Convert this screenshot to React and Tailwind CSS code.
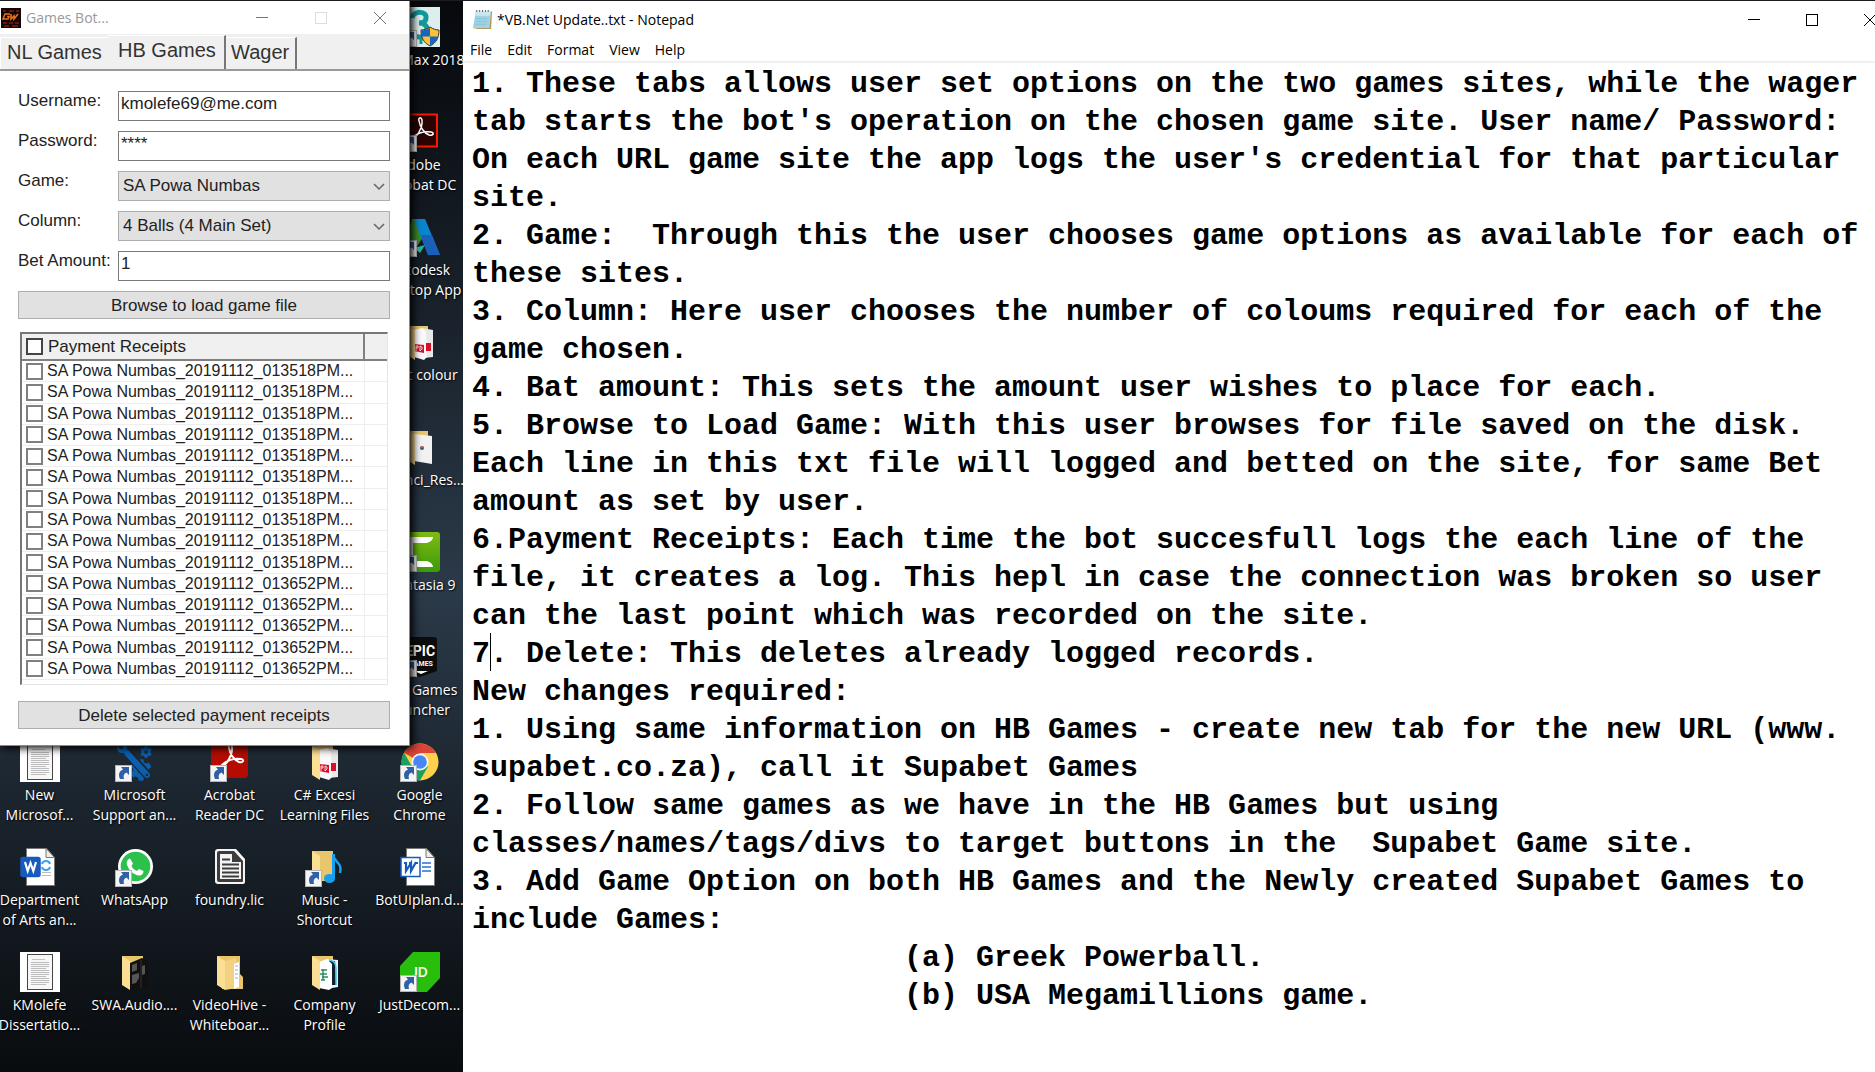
import React from "react";
import { FaWrench, FaCog } from "react-icons/fa";

const UI = "font-['Open_Sans','Noto_Sans',sans-serif]";
const FORM = "font-['Liberation_Sans',Arial,sans-serif]";

const NOTE = `1. These tabs allows user set options on the two games sites, while the wager
tab starts the bot's operation on the chosen game site. User name/ Password:
On each URL game site the app logs the user's credential for that particular
site.
2. Game:  Through this the user chooses game options as available for each of
these sites.
3. Column: Here user chooses the number of coloums required for each of the
game chosen.
4. Bat amount: This sets the amount user wishes to place for each.
5. Browse to Load Game: With this user browses for file saved on the disk.
Each line in this txt file will logged and betted on the site, for same Bet
amount as set by user.
6.Payment Receipts: Each time the bot succesfull logs the each line of the
file, it creates a log. This hepl in case the connection was broken so user
can the last point which was recorded on the site.
7. Delete: This deletes already logged records.
New changes required:
1. Using same information on HB Games - create new tab for the new URL (www.
supabet.co.za), call it Supabet Games
2. Follow same games as we have in the HB Games but using
classes/names/tags/divs to target buttons in the  Supabet Game site.
3. Add Game Option on both HB Games and the Newly created Supabet Games to
include Games:
                        (a) Greek Powerball.
                        (b) USA Megamillions game.`;

function Svg({ children }) {
  return (
    <svg viewBox="0 0 40 40" className="size-10" aria-hidden="true">
      {children}
    </svg>
  );
}

function Arrow() {
  return (
    <g>
      <rect x="0.5" y="23.5" width="16" height="16" fill="#f4f4f4" stroke="#b5b5b5" />
      <path d="M5 37c-2-4-1-8 3-9.500l-2-2.500h8v8l-2.500-2.500c-2.500 1-3.500 3-2.500 6.500z" fill="#2f5fa5" />
    </g>
  );
}

function PaperIcon() {
  return (
    <Svg>
      <rect width="40" height="40" fill="#fff" />
      <rect x="7.500" y="2.500" width="25" height="35" fill="#f7f7f7" stroke="#444" />
      <path d="M12 7.500h13" stroke="#c4c4c4" />
      {[10, 12, 14, 16, 18, 20, 22, 24, 26, 28, 30, 32].map((y, i) => (
        <path key={y} d={`M11 ${y}.5h${i % 4 === 3 ? 15 : 18}`} stroke="#bdbdbd" />
      ))}
    </Svg>
  );
}

function FolderIcon({ children, shortcut, full }) {
  return (
    <Svg>
      <path d={full ? "M7 4h23v18l3 3v12h-21z" : "M7 4h21v30H12z"} fill="#e9c66c" />
      {children}
      <path d="M7 4l8 5v29l-8-5z" fill="#fbdf94" />
      {shortcut && <Arrow />}
    </Svg>
  );
}

function PdfFolderIcon() {
  return (
    <FolderIcon>
      <path d="M22 6l11 2v27l-9 1z" fill="#e8e8e8" />
      <path d="M14 8l8-2 4 4 1 25-3 3-10-3z" fill="#fafafa" />
      <path d="M14 22l10 1v8l-10-2z M26 21h5v8h-5z" fill="#d9102a" />
      <path d="M16 24v5m0-5h2v2h-2M20 24v5l2-2v-2z" stroke="#fff" fill="none" strokeWidth="0.8" />
    </FolderIcon>
  );
}

function WordIcon({ old }) {
  return (
    <Svg>
      <path d="M6.500 1.500h20l8 9v28h-28z" fill="#fff" stroke="#777" />
      <path d="M26 1.500v9h8.500z" fill="#eee" stroke="#777" />
      {old ? (
        <path d="M22 16h9M22 20h9M22 24h9" stroke="#2a72c8" strokeWidth="1.300" />
      ) : (
        <g fill="none">
          <path d="M22 17c1-4 7-4 8 0M22 20c1 4 7 4 8 0" stroke="#3aa0e8" strokeWidth="2" />
          <path d="M22 25.500h9M22 28.500h9" stroke="#bbb" />
        </g>
      )}
      <rect x="1" y="10.500" width="19" height="19" rx={old ? 0 : 2} fill={old ? "#fff" : "#185abd"} stroke="#185abd" strokeWidth="1.500" />
      <path
        d={old ? "M4 16h3M6 15v9l5-8v8l5-9M9 16h3M15 16h3" : "M5 15l2.700 9 2.800-8 2.800 8 2.700-9"}
        fill="none"
        stroke={old ? "#185abd" : "#fff"}
        strokeWidth="2.200"
      />
    </Svg>
  );
}

const ACROBAT = "M11 29c4-2 11-12 10-20-1-4-4-2-3 1 1 6 5 12 10 14 4 1 6-2 2-3-6-1-13 1-18 5-3 2-3 4-1 3z";

const ICONS = {
  max: (
    <Svg>
      <rect width="40" height="40" fill="#dcefee" />
      <path d="M12 11c2-8 15-7 14 0 0 4-4 5-7 5 5 0 9 3 8 8-2 7-12 8-14 2" fill="none" stroke="#12999c" strokeWidth="5" />
      <path d="M21 28v9" stroke="#12999c" strokeWidth="3" />
      <path d="M30 20c3 2 6 3 9 3 0 8-3 13-9 16-6-3-9-8-9-16 3 0 6-1 9-3z" fill="#ffc233" stroke="#333" strokeWidth="1" />
      <path d="M30 21v8.500h-8.500c-.5-2-.5-4-.5-6 3 0 6-1 9-2.500zM30 29.500h8c-1 4-4 7-8 9z" fill="#1765c1" />
      <Arrow />
    </Svg>
  ),
  acrobat: (
    <Svg>
      <rect x="3" y="2.500" width="34" height="32" fill="#2a0303" stroke="#f91800" strokeWidth="2" />
      <path d={ACROBAT} fill="none" stroke="#fff" strokeWidth="1.500" transform="translate(1 -1)" />
      <Arrow />
    </Svg>
  ),
  autodesk: (
    <Svg>
      <path d="M2 38L12 2h6l5 18-9 14z" fill="#3a8d2f" />
      <path d="M14 2h11l15 36H28z" fill="#0a86cf" />
      <path d="M21 18l6 17 2 3h11l-8-20z" fill="#1a5fb8" />
      <path d="M14 31l11-3-5 8z" fill="#27b79a" />
      <Arrow />
    </Svg>
  ),
  pdf: <PdfFolderIcon />,
  davinci: (
    <FolderIcon>
      <path d="M14 7l18 2v28l-18-3z" fill="#f2f2f2" />
      <circle cx="22" cy="21" r="2" fill="#385b70" />
      <circle cx="22" cy="20" r="1" fill="#d06045" />
    </FolderIcon>
  ),
  camtasia: (
    <Svg>
      <defs>
        <linearGradient id="cam" x1="0" y1="0" x2="0" y2="1">
          <stop stopColor="#7fbb12" />
          <stop offset="1" stopColor="#3c9b08" />
        </linearGradient>
      </defs>
      <rect width="40" height="40" rx="3" fill="url(#cam)" />
      <path d="M5 5h28c0 3-3 5-6 6H13v18h14c3 1 6 3 6 6H5z" fill="#fff" />
      <Arrow />
    </Svg>
  ),
  epic: (
    <Svg>
      <path d="M3 3q0-3 3-3h28q3 0 3 3v31l-17 6-17-6z" fill="#0c0c0c" />
      <text x="20" y="19" textAnchor="middle" fontSize="14" fontWeight="700" fill="#fff" fontFamily="Roboto, sans-serif">EPIC</text>
      <text x="21" y="29" textAnchor="middle" fontSize="7" fontWeight="700" fill="#fff" fontFamily="Roboto, sans-serif">GAMES</text>
      <path d="M14 34h14l-7 3z" fill="#fff" />
      <Arrow />
    </Svg>
  ),
  paper: <PaperIcon />,
  tools: (
    <Svg>
      <FaCog x="15" y="17" size="22" color="#0b5fae" />
      <FaCog x="25" y="4" size="12" color="#0b5fae" />
      <path d="M12 10l22 25" stroke="#1c2630" strokeWidth="9" />
      <path d="M12 11l20 22" stroke="#0b5fae" strokeWidth="6" strokeLinecap="round" />
      <g transform="translate(26 0) scale(-1 1)">
        <FaWrench x="6" y="1" size="18" color="#0b5fae" />
      </g>
      <circle cx="32" cy="33" r="1.300" fill="#1c2630" />
      <Arrow />
    </Svg>
  ),
  reader: (
    <Svg>
      <rect x="1" y="0" width="37" height="36" rx="4" fill="#b40c00" />
      <path d={ACROBAT} fill="none" stroke="#fff" strokeWidth="2" transform="translate(1 -4)" />
      <Arrow />
    </Svg>
  ),
  chrome: (
    <Svg>
      <circle cx="20" cy="20" r="18.500" fill="#fdd14b" />
      <path d="M20 20L4 10.700A18.500 18.500 0 0 1 36 11H20z" fill="#db4437" />
      <path d="M4 10.700A18.500 18.500 0 0 0 20 38.500l8-14-16 0z" fill="#1ba15f" />
      <circle cx="20" cy="20" r="8.500" fill="#f4f4f4" />
      <circle cx="20" cy="20" r="6.800" fill="#4a85f5" />
      <Arrow />
    </Svg>
  ),
  word: <WordIcon />,
  wordOld: <WordIcon old />,
  whatsapp: (
    <Svg>
      <circle cx="20.500" cy="19.500" r="17.500" fill="#fff" />
      <circle cx="20.500" cy="19.500" r="14.800" fill="#2cc04c" />
      <path d="M15 11.500c-3 1-4 4-2.500 7.500 2 5 6 8.500 11 9.500 3 .5 5-1.500 5-4.500l-4.500-2-2.200 2c-2.500-1-4.300-3-5.300-5l1.500-2.500z" fill="#fff" />
      <Arrow />
    </Svg>
  ),
  foundry: (
    <Svg>
      <path d="M8 2h18l9 10v23q0 2-2 2H8q-3 0-3-3V5q0-3 3-3z" fill="#f4f4f4" />
      <path d="M9 4h15l9 10v20q0 1-1 1H9q-2 0-2-2V6q0-2 2-2z" fill="#3c3c3c" />
      <path d="M10 7h12v8h9v17H10z" fill="#f4f4f4" />
      <path d="M12 12.500h8M12 17.500h17M12 21.500h17M12 25.500h17M12 29.500h17" stroke="#3c3c3c" strokeWidth="2" />
    </Svg>
  ),
  music: (
    <FolderIcon shortcut>
      <path d="M28.500 7v24" stroke="#18a0f0" strokeWidth="3" />
      <path d="M28 8c1 7 10 8 7 18" fill="none" stroke="#18a0f0" strokeWidth="2.500" />
      <ellipse cx="24.500" cy="31.500" rx="5.500" ry="4.500" fill="#18a0f0" />
    </FolderIcon>
  ),
  audio: (
    <FolderIcon>
      <path d="M15 11l12-5 6 3v27l-9 1-9 1z" fill="#101010" />
      <path d="M17 13l5-2v7l-5 2zM27 14l3-1v9l-3 1zM17 23l7-2v5l-3 5-4 1z" fill="#555" />
      <path d="M26 8v28" stroke="#333" />
    </FolderIcon>
  ),
  video: (
    <FolderIcon full>
      <path d="M15 9l11-3 1 30-12 2z" fill="#f2d183" />
      <path d="M24 12l5-2v25l-5 2z" fill="#fff" />
      <path d="M25 14h3M25 18h3M25 22h3M25 26h3" stroke="#7fb2dd" />
    </FolderIcon>
  ),
  company: (
    <FolderIcon>
      <path d="M21 7l12 1v27l-12 2z" fill="#e8f6fb" />
      <path d="M21 9h9l1 24h-8z" fill="#0b2233" />
      <path d="M24 8c6 1 7 4 7 10v15" fill="none" stroke="#44c4e8" strokeWidth="1.500" />
      <path d="M14 10l8-3 5 5v24l-3 2-10-2z" fill="#fff" />
      <path d="M16 18h6M15 22h7M17 25h6M16 28h4M18 17v11" stroke="#2a9060" strokeWidth="1.500" />
    </FolderIcon>
  ),
  decompile: (
    <Svg>
      <path d="M13 0h27v26L27 40H0V14z" fill="#27bf0b" />
      <text x="20" y="25" textAnchor="middle" fontSize="13" fontWeight="700" fill="#fff" fontFamily="Lato, sans-serif">JD</text>
      <Arrow />
    </Svg>
  ),
};

const RIGHT_COLUMN = [
  ["max", "3ds Max 2018"],
  ["acrobat", "Adobe", "Acrobat DC"],
  ["autodesk", "Autodesk", "Desktop App"],
  ["pdf", "Print colour"],
  ["davinci", "DaVinci_Res..."],
  ["camtasia", "Camtasia 9"],
  ["epic", "Epic Games", "Launcher"],
];

const LOWER_ROWS = [
  ["paper", "New", "Microsof..."],
  ["tools", "Microsoft", "Support an..."],
  ["reader", "Acrobat", "Reader DC"],
  ["pdf", "C# Excesi", "Learning Files"],
  ["chrome", "Google", "Chrome"],
  ["word", "Department", "of Arts an..."],
  ["whatsapp", "WhatsApp"],
  ["foundry", "foundry.lic"],
  ["music", "Music -", "Shortcut"],
  ["wordOld", "BotUIplan.d..."],
  ["paper", "KMolefe", "Dissertatio..."],
  ["audio", "SWA.Audio...."],
  ["video", "VideoHive -", "Whiteboar..."],
  ["company", "Company", "Profile"],
  ["decompile", "JustDecom..."],
];

function DesktopItem({ item, last }) {
  const [icon, ...lines] = item;
  return (
    <li className={last ? "col-start-5 flex flex-col items-center gap-[3px]" : "flex flex-col items-center gap-[3px]"}>
      {ICONS[icon]}
      <span className="text-center text-[14px] leading-5 whitespace-nowrap text-white [text-shadow:1px_1px_2px_#000]">
        {lines.map((l) => (
          <span key={l} className="block">{l}</span>
        ))}
      </span>
    </li>
  );
}

function WinButtons({ muted, className }) {
  const stroke = muted ? "#777" : "#000";
  return (
    <div className={className}>
      <button type="button" aria-label="Minimize" className="flex h-full flex-1 items-center justify-center">
        <svg width="12" height="12"><path d="M0 5.500h12" stroke={stroke} /></svg>
      </button>
      <button type="button" aria-label="Maximize" className="flex h-full flex-1 items-center justify-center">
        <svg width="12" height="12"><rect x="0.5" y="0.5" width="11" height="11" fill="none" stroke={muted ? "#ddd" : stroke} /></svg>
      </button>
      <button type="button" aria-label="Close" className="flex h-full flex-1 items-center justify-center">
        <svg width="12" height="12"><path d="M0 0l12 12M12 0L0 12" stroke={stroke} /></svg>
      </button>
    </div>
  );
}

const FIELD = "h-[30px] w-full border border-[#7a7a7a] bg-white px-[2px] pb-1 text-[17px] text-[#222] outline-none";

function Row({ id, label, children }) {
  return (
    <div className="flex h-[30px]">
      <label htmlFor={id} className="w-[100px] shrink-0 leading-5 whitespace-nowrap">{label}</label>
      <div className="relative flex-1">{children}</div>
    </div>
  );
}

function Select({ id, value }) {
  return (
    <>
      <select id={id} className="h-[30px] w-full appearance-none border border-[#adadad] bg-[#e1e1e1] px-1 text-[17px] text-[#222] outline-none">
        <option>{value}</option>
      </select>
      <svg viewBox="0 0 12 8" className="pointer-events-none absolute top-3 right-[5px] h-2 w-3">
        <path d="M1 1l5 5 5-5" fill="none" stroke="#666" strokeWidth="1.500" />
      </svg>
    </>
  );
}

const RECEIPTS = Array.from({ length: 15 }, (_, i) =>
  i < 10 ? "SA Powa Numbas_20191112_013518PM..." : "SA Powa Numbas_20191112_013652PM..."
);

const BTN = "h-7 w-full border border-[#adadad] bg-[#e1e1e1] text-[17px] leading-none text-[#222]";

function GamesBot() {
  return (
    <section aria-label="Games Bot" className="absolute top-0 left-0 w-[410px] border-r border-b border-[#8a8a8a] bg-white shadow-[3px_2px_8px_#000]">
      <header className={`flex h-[33px] items-center ${UI}`}>
        <svg viewBox="0 0 20 20" className="ml-px size-5" aria-hidden="true">
          <rect width="20" height="20" fill="#120606" />
          <path d="M9 6H4L2 11h5l1-2.500H6M10 6l0 5 3-3 0 3 4-5" fill="none" stroke="#e8701c" strokeWidth="1.600" />
          <path d="M2 3h3M8 3h5M15 3h3M2 15h4M8 15h4M14 15h4M3 18h5M11 18h6" stroke="#8c1414" strokeWidth="1.500" />
        </svg>
        <h1 className="ml-[5px] text-[14px] text-[#999]">Games Bot...</h1>
        <WinButtons muted className="ml-auto flex h-full w-[177px]" />
      </header>

      <nav role="tablist" className={`flex h-[37px] items-end border-b-2 border-[#9a9a9a] bg-[#f0f0f0] text-[20px] leading-none text-[#333] ${FORM}`}>
        <button type="button" role="tab" aria-selected="false" className="h-8 w-[108px] border-t border-l border-white pb-[3px] pl-[6px] text-left whitespace-nowrap">NL Games</button>
        <button type="button" role="tab" aria-selected="true" className="h-[34px] w-[118px] border-t border-r-2 border-t-white border-r-[#777] pb-[6px] pl-[10px] text-left whitespace-nowrap">HB Games</button>
        <button type="button" role="tab" aria-selected="false" className="h-8 w-[71px] border-t border-r-2 border-t-white border-r-[#777] pb-[3px] pl-[5px] text-left">Wager</button>
      </nav>

      <form className={`pt-5 pr-[19px] pb-4 pl-[18px] text-[17px] text-[#222] ${FORM}`} onSubmit={(e) => e.preventDefault()}>
        <div className="flex flex-col gap-[10px]">
          <Row id="user" label="Username:">
            <input id="user" className={FIELD} defaultValue="kmolefe69@me.com" />
          </Row>
          <Row id="pass" label="Password:">
            <input id="pass" className={FIELD} defaultValue="****" autoComplete="off" />
          </Row>
          <Row id="game" label="Game:">
            <Select id="game" value="SA Powa Numbas" />
          </Row>
          <Row id="column" label="Column:">
            <Select id="column" value="4 Balls (4 Main Set)" />
          </Row>
          <Row id="bet" label="Bet Amount:">
            <input id="bet" className={FIELD} defaultValue="1" />
          </Row>
        </div>
        <button type="button" className={`mt-[10px] ${BTN}`}>Browse to load game file</button>

        <div className="mt-[13px] mr-[2px] ml-[2px] border-t-2 border-r border-b border-l-2 border-t-[#777] border-r-[#e5e5e5] border-b-[#e5e5e5] border-l-[#777] pb-1">
          <table className="h-[346px] w-full table-fixed border-collapse text-[16px] leading-5">
            <thead>
              <tr className="bg-[#f0f0f0]">
                <th className="h-[26px] w-[342px] border-r-2 border-b-2 border-[#808080] p-0 text-left font-normal">
                  <label className="flex items-center gap-[5px] pl-1 text-[17px]">
                    <input type="checkbox" className="size-[17px] appearance-none border-2 border-[#444] bg-white" />
                    Payment Receipts
                  </label>
                </th>
                <th className="border-b-2 border-[#808080] p-0" aria-label="Status" />
              </tr>
            </thead>
            <tbody>
              {RECEIPTS.map((r, i) => (
                <tr key={i} className="border-b border-[#eee]">
                  <td className="border-r border-[#eee] p-0">
                    <label className="flex items-center gap-1 pl-1 whitespace-nowrap">
                      <input type="checkbox" className="size-[17px] shrink-0 appearance-none border-2 border-[#808080] bg-white" />
                      {r}
                    </label>
                  </td>
                  <td className="p-0" />
                </tr>
              ))}
            </tbody>
          </table>
        </div>
        <button type="button" className={`mt-4 ${BTN}`}>Delete selected payment receipts</button>
      </form>
    </section>
  );
}

function Notepad() {
  return (
    <section aria-label="Notepad" className="flex min-w-0 flex-1 flex-col overflow-hidden bg-white text-black">
      <header className="flex h-[37px] items-center pl-[9px]">
        <svg viewBox="0 0 22 22" className="size-[21px]" aria-hidden="true">
          <path d="M4 2h16l-2 18H1z" fill="#9fd3e3" />
          <path d="M4 2h16l-1 5H3z" fill="#c8e8f0" />
          <path d="M20 2l1 1-1 18H6l-5-1 17 0z" fill="#b19a62" />
          <path d="M5 1v2M8 1v2M11 1v2M14 1v2M17 1v2" stroke="#555" strokeWidth="1" />
          <path d="M4 10h12M4 13h12M3 16h12" stroke="#7dbdd2" strokeWidth="0.7" />
        </svg>
        <h1 className="ml-1 text-[14px]">*VB.Net Update..txt - Notepad</h1>
        <WinButtons className="-mr-6 ml-auto flex h-full w-[174px]" />
      </header>
      <nav className="flex h-[25px] items-end gap-[15px] border-b-2 border-[#f0f0f0] pl-[7px] text-[14px] leading-[22px]">
        {["File", "Edit", "Format", "View", "Help"].map((m) => (
          <button key={m} type="button">{m}</button>
        ))}
      </nav>
      <div className="relative flex flex-1">
        <textarea
          aria-label="Text editor"
          wrap="off"
          spellCheck={false}
          defaultValue={NOTE}
          className="flex-1 resize-none overflow-hidden pt-[2px] pl-[9px] font-['Liberation_Mono',monospace] text-[30px] leading-[38px] font-bold whitespace-pre outline-none"
        />
        <span className="pointer-events-none absolute top-[570px] left-[27px] h-[38px] w-px bg-black" />
      </div>
    </section>
  );
}

export default function App() {
  return (
    <main className={`flex min-h-screen border-t border-[#1b1b20] ${UI}`}>
      <div className="relative w-[463px] shrink-0 overflow-hidden bg-linear-to-b from-[#07090d] via-[#2b3a49] via-55% to-[#090c0f]">
        <ul className="mt-[6px] -ml-2 grid auto-rows-[105px] grid-cols-[repeat(5,95px)]">
          {RIGHT_COLUMN.map((it) => (
            <DesktopItem key={it[1]} item={it} last />
          ))}
          {LOWER_ROWS.map((it) => (
            <DesktopItem key={it[1]} item={it} />
          ))}
        </ul>
        <GamesBot />
      </div>
      <Notepad />
    </main>
  );
}
